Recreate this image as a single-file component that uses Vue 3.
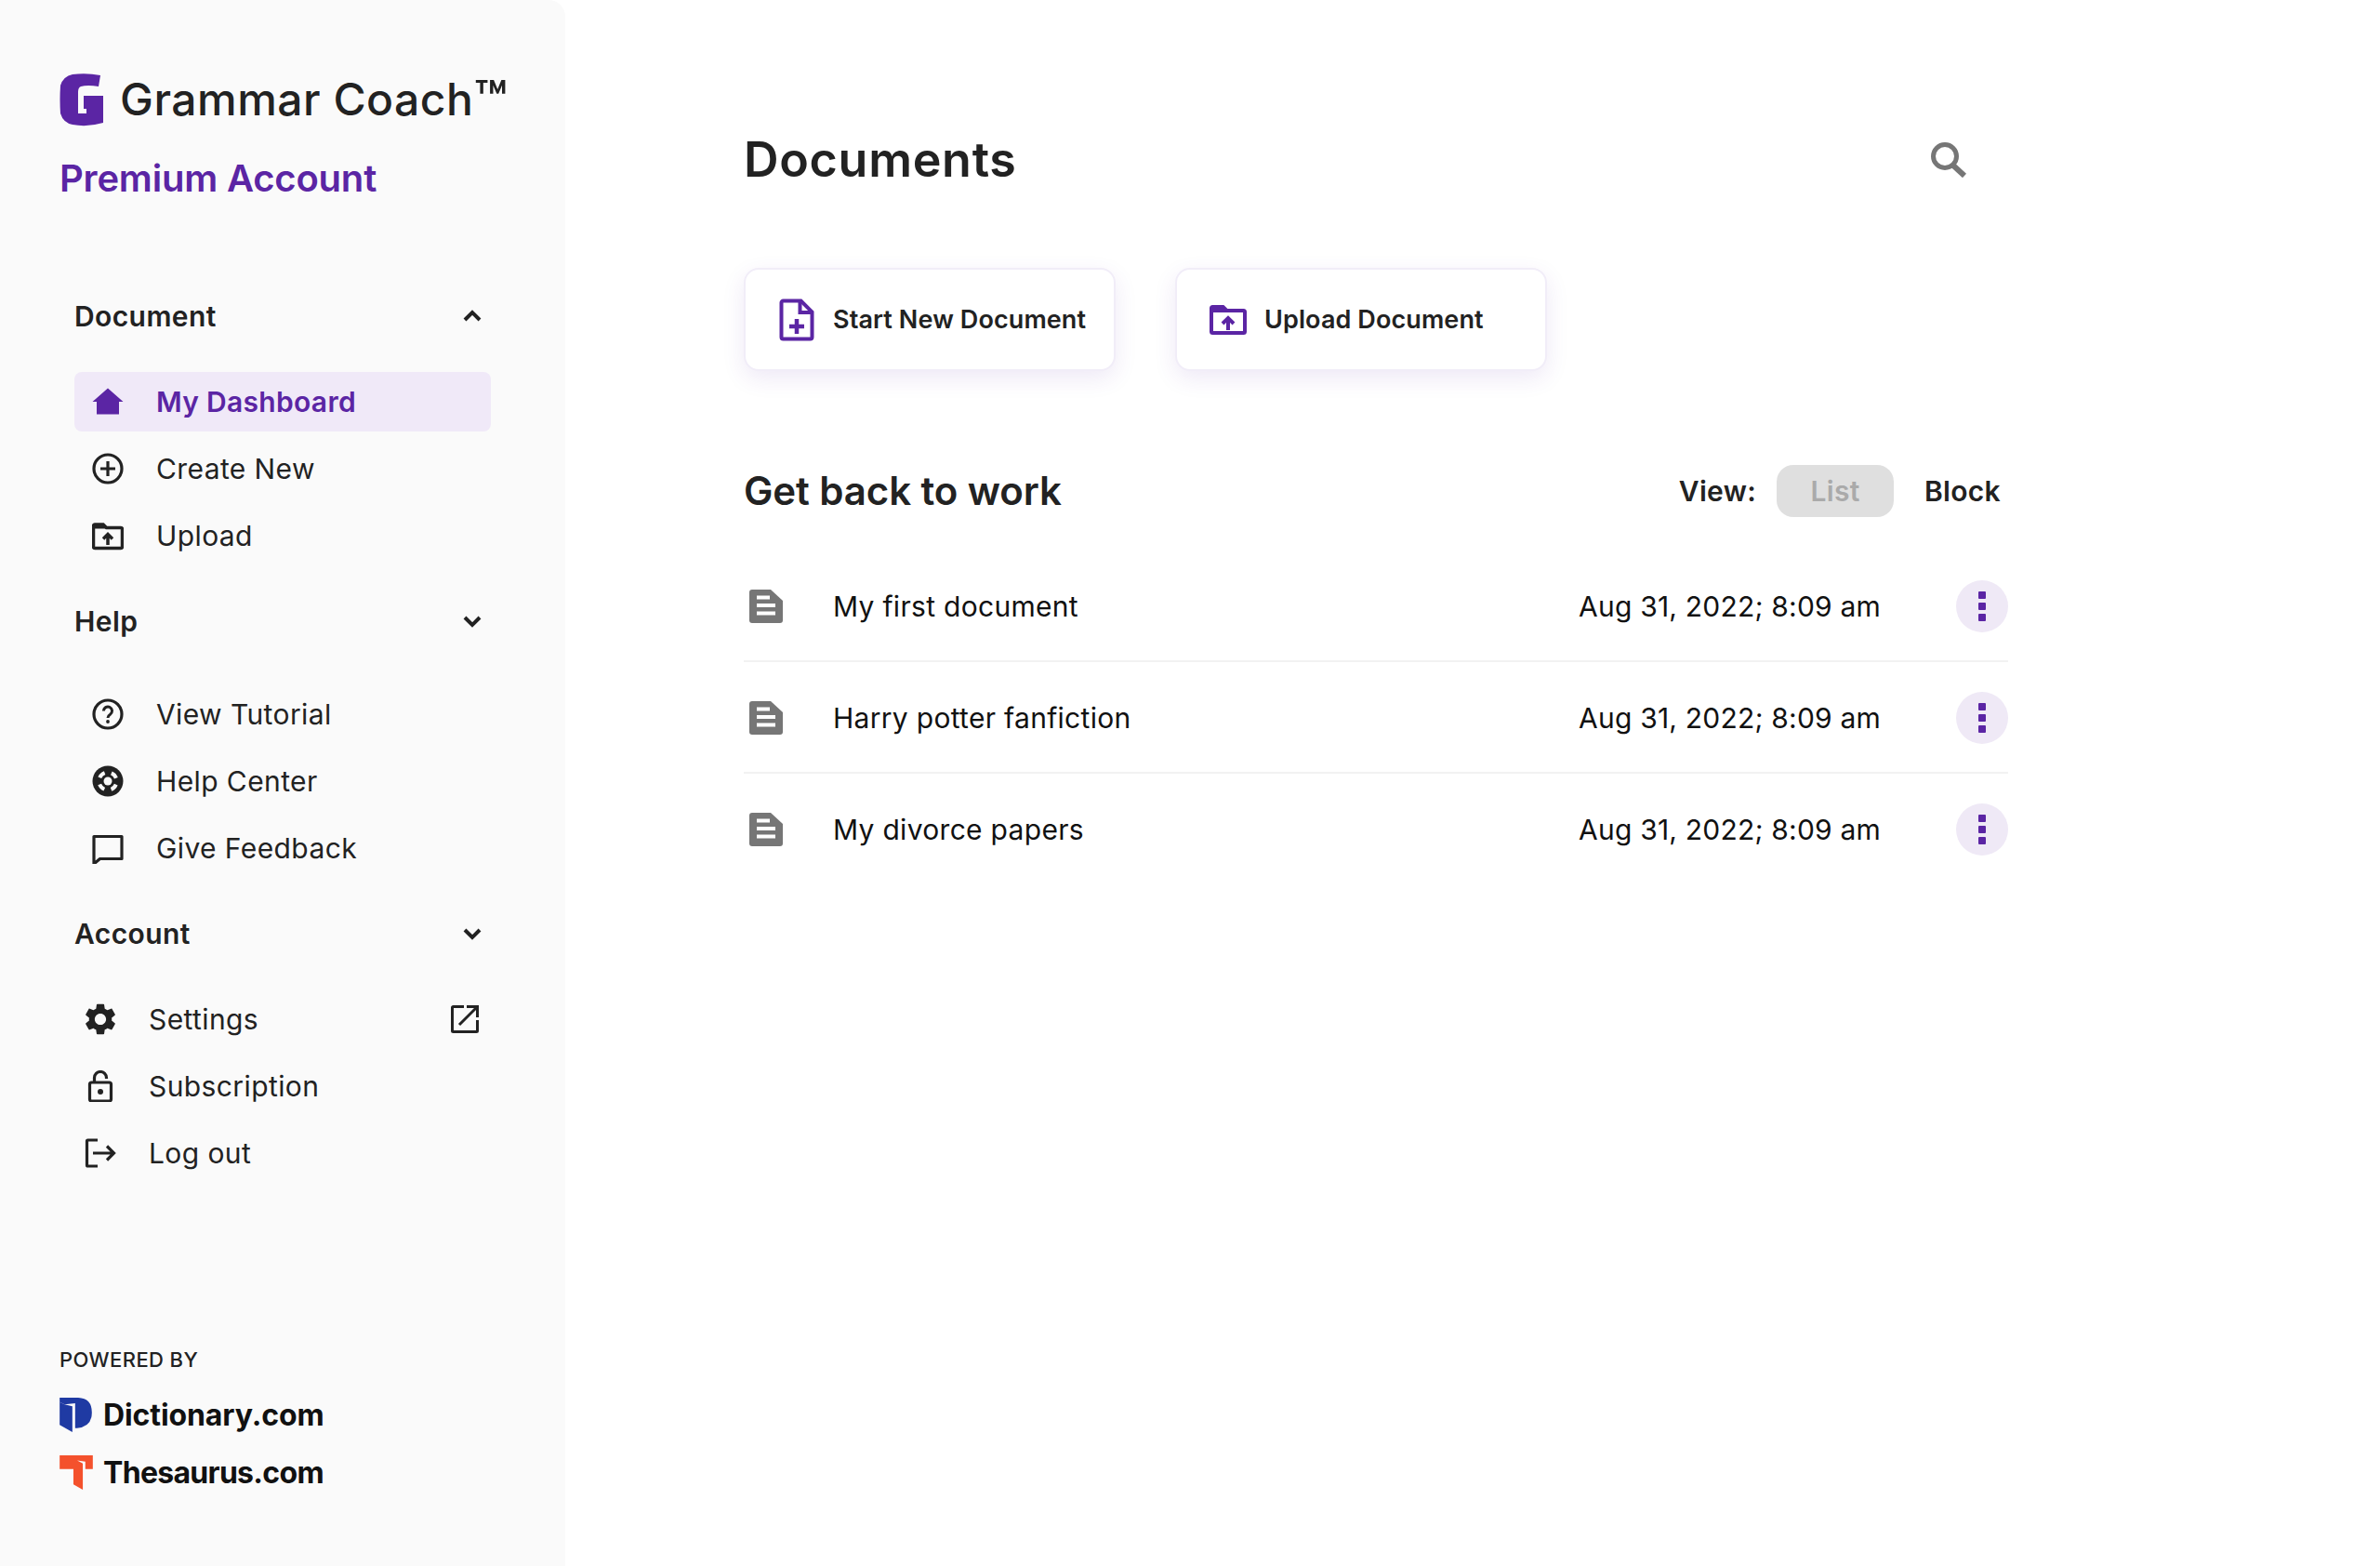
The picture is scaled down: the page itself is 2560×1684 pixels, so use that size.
<script setup>
const icons = {
  home: '<path d="M17 2.500 0.500 17H5v13.500h24V17h4.500z" fill="currentColor"/>',
  plus: '<circle cx="17" cy="17" r="15" fill="none" stroke="currentColor" stroke-width="3.200"/><path d="M17 9v16M9 17h16" stroke="currentColor" stroke-width="3.200" fill="none"/>',
  folder: '<path d="M1.500 6.500a1.500 1.500 0 0 1 1.500-1.500h9l3.500 3.500H31a1.500 1.500 0 0 1 1.500 1.500v19a1.500 1.500 0 0 1-1.500 1.500H3a1.500 1.500 0 0 1-1.500-1.500z" fill="none" stroke="currentColor" stroke-width="3.500"/><path d="M1.500 5h11l4 4.500H1.500z" fill="currentColor"/><path d="M17 27V17M12 20.500l5-5 5 5" fill="none" stroke="currentColor" stroke-width="3.500"/>',
  help: '<circle cx="17" cy="17" r="15" fill="none" stroke="currentColor" stroke-width="3.200"/><path d="M12.500 13.500a4.500 4.500 0 1 1 7 3.700c-1.600 1-2.500 1.800-2.500 3.800" fill="none" stroke="currentColor" stroke-width="3"/><circle cx="17" cy="25" r="1.900" fill="currentColor"/>',
  support: '<circle cx="17" cy="17" r="16.500" fill="currentColor"/><circle cx="17" cy="17" r="4.500" fill="#fafafa"/><circle cx="17" cy="17" r="9.500" fill="none" stroke="#fafafa" stroke-width="4" stroke-dasharray="7.500 7.420" stroke-dashoffset="-3.710"/>',
  chat: '<path d="M2 4.500h30v24H8.500L2 34z" fill="none" stroke="currentColor" stroke-width="3.200" stroke-linejoin="round"/>',
  gear: '<path transform="translate(-3.400 -3.400) scale(1.700)" d="M19.140 12.940c.04-.3.06-.61.06-.94 0-.32-.02-.64-.07-.94l2.030-1.580c.18-.14.23-.41.12-.61l-1.920-3.320c-.12-.22-.37-.29-.59-.22l-2.390.96c-.5-.38-1.030-.7-1.620-.94l-.36-2.540c-.04-.24-.24-.41-.48-.41h-3.840c-.24 0-.43.17-.47.41l-.36 2.540c-.59.24-1.130.57-1.620.94l-2.390-.96c-.22-.08-.47 0-.59.22L2.740 8.870c-.12.21-.08.47.12.61l2.030 1.580c-.05.3-.09.63-.09.94s.02.64.07.94l-2.030 1.580c-.18.14-.23.41-.12.61l1.920 3.320c.12.22.37.29.59.22l2.390-.96c.5.38 1.030.7 1.620.94l.36 2.540c.05.24.24.41.48.41h3.840c.24 0 .44-.17.47-.41l.36-2.540c.59-.24 1.130-.56 1.620-.94l2.390.96c.22.08.47 0 .59-.22l1.920-3.320c.12-.22.07-.47-.12-.61l-2.010-1.580zM12 15.600c-1.980 0-3.600-1.620-3.600-3.600s1.620-3.600 3.600-3.600 3.600 1.620 3.600 3.600-1.620 3.600-3.600 3.600z" fill="currentColor"/>',
  lock: '<rect x="5.500" y="13" width="23" height="20" rx="2" fill="none" stroke="currentColor" stroke-width="3.200"/><path d="M10.500 13V8a6.500 6.500 0 0 1 13 0v1" fill="none" stroke="currentColor" stroke-width="3.200"/><circle cx="17" cy="23" r="3" fill="currentColor"/>',
  logout: '<path d="M14 3H3.500a1 1 0 0 0-1 1v26a1 1 0 0 0 1 1H14" fill="none" stroke="currentColor" stroke-width="3.200"/><path d="M9 17h22M24 9.500l7.500 7.500-7.500 7.500" fill="none" stroke="currentColor" stroke-width="3.200"/>'
}

const sections = [
  {
    name: 'doc', title: 'Document', open: true,
    items: [
      { label: 'My Dashboard', icon: 'home', active: true },
      { label: 'Create New', icon: 'plus' },
      { label: 'Upload', icon: 'folder' }
    ]
  },
  {
    name: 'help', title: 'Help',
    items: [
      { label: 'View Tutorial', icon: 'help' },
      { label: 'Help Center', icon: 'support' },
      { label: 'Give Feedback', icon: 'chat' }
    ]
  },
  {
    name: 'account', title: 'Account',
    items: [
      { label: 'Settings', icon: 'gear', external: true },
      { label: 'Subscription', icon: 'lock' },
      { label: 'Log out', icon: 'logout' }
    ]
  }
]

const documentos = [
  { id: 1, titulo: 'My first document', fecha: 'Aug 31, 2022; 8:09 am' },
  { id: 2, titulo: 'Harry potter fanfiction', fecha: 'Aug 31, 2022; 8:09 am' },
  { id: 3, titulo: 'My divorce papers', fecha: 'Aug 31, 2022; 8:09 am' }
]
</script>

<template>
  <div class="layout">
    <aside class="sidebar">
      <div class="brand">
        <svg class="brand-logo" width="48" height="58" viewBox="0 0 48 58">
          <path d="M14 2Q29 0 44 3L42 15Q30 13 23 15Q20 16 20 21L20 44L29 44L29 39L26 39L26 25L47 25L47 54Q30 59 14 56Q4 54 1 44Q0 29 1 14Q4 4 14 2Z" fill="#5b25a4"/>
        </svg>
        <span class="brand-name">Grammar Coach<span class="brand-tm">™</span></span>
      </div>
      <div class="premium">Premium Account</div>

      <nav class="nav">
        <section v-for="s in sections" :key="s.name" class="section" :class="'section-' + s.name">
          <header class="section-head">
            <span>{{ s.title }}</span>
            <svg width="20" height="14" viewBox="0 0 20 14">
              <path :d="s.open ? 'M2 11l8-8 8 8' : 'M2 3l8 8 8-8'" fill="none" stroke="#222" stroke-width="4"/>
            </svg>
          </header>
          <ul class="nav-list">
            <li v-for="item in s.items" :key="item.label" class="nav-row" :class="{ active: item.active }">
              <svg class="nav-icon" width="34" height="34" viewBox="0 0 34 34" v-html="icons[item.icon]"></svg>
              <span class="nav-label">{{ item.label }}</span>
              <svg v-if="item.external" class="nav-external" width="30" height="30" viewBox="0 0 30 30">
                <path d="M14 1.500H2.500a1 1 0 0 0-1 1v25a1 1 0 0 0 1 1h25a1 1 0 0 0 1-1V16" fill="none" stroke="#222" stroke-width="3"/>
                <path d="M9 21 27 3M17 1.500h11.500V13" fill="none" stroke="#222" stroke-width="3"/>
              </svg>
            </li>
          </ul>
        </section>
      </nav>

      <footer class="powered">
        <div class="powered-title">POWERED BY</div>
        <div class="partner dict">
          <svg width="35" height="37" viewBox="24 24 104 111">
            <path d="M24 24H84Q128 26 128 72Q128 118 80 122H74V42L40 46L24 38Z" fill="#1f3aa3"/>
            <path d="M24 38L40 46L65 52V135L24 112Z" fill="#1f3aa3"/>
          </svg>
          <span>Dictionary.com</span>
        </div>
        <div class="partner thes">
          <svg width="36" height="37" viewBox="24 212 106 110">
            <path d="M24 212H130V256H106V232L80 228L98 238V322L68 305V256H24Z" fill="#f4512c"/>
          </svg>
          <span>Thesaurus.com</span>
        </div>
      </footer>
    </aside>

    <main class="content">
      <div class="top-row">
        <h1>Documents</h1>
        <svg class="search" width="40" height="38" viewBox="0 0 40 38">
          <circle cx="15" cy="15" r="12.500" fill="none" stroke="#767676" stroke-width="5"/>
          <path d="M23 24l13 12" stroke="#767676" stroke-width="6" fill="none"/>
        </svg>
      </div>

      <div class="actions">
        <button class="action">
          <svg width="40" height="46" viewBox="0 0 40 46">
            <path d="M3.500 4.500a2 2 0 0 1 2-2h19l12 12v27a2 2 0 0 1-2 2h-29a2 2 0 0 1-2-2z" fill="none" stroke="#5b25a4" stroke-width="4"/>
            <path d="M23.500 3v12h13" fill="none" stroke="#5b25a4" stroke-width="4"/>
            <path d="M20 22v16M12 30h16" stroke="#5b25a4" stroke-width="4.500" fill="none"/>
          </svg>
          <span>Start New Document</span>
        </button>
        <button class="action">
          <svg width="40" height="32" viewBox="0 0 40 32">
            <path d="M2 3.500a1.500 1.500 0 0 1 1.500-1.500h11l4 4h18a1.500 1.500 0 0 1 1.500 1.500v21a1.500 1.500 0 0 1-1.500 1.500h-33a1.500 1.500 0 0 1-1.500-1.500z" fill="none" stroke="#5b25a4" stroke-width="4"/>
            <path d="M1.500 2h13l5 6h-18z" fill="#5b25a4"/>
            <path d="M20 27V15M14 20l6-6 6 6" fill="none" stroke="#5b25a4" stroke-width="4"/>
          </svg>
          <span>Upload Document</span>
        </button>
      </div>

      <div class="list-head">
        <h2>Get back to work</h2>
        <div class="view-switch">
          <span class="view-label">View:</span>
          <span class="view-pill">List</span>
          <span class="view-block">Block</span>
        </div>
      </div>

      <div class="doc-list">
        <article v-for="doc in documentos" :key="doc.id" class="doc-row">
          <svg class="doc-icon" width="36" height="36" viewBox="0 0 36 36">
            <path d="M3 0h20l13 12v21a3 3 0 0 1-3 3H3a3 3 0 0 1-3-3V3a3 3 0 0 1 3-3z" fill="#767676"/>
            <path d="M8 8.500h14M8 17h20M8 25.500h20" stroke="#fff" stroke-width="4"/>
          </svg>
          <span class="doc-title">{{ doc.titulo }}</span>
          <span class="doc-date">{{ doc.fecha }}</span>
          <span class="doc-menu"><i></i><i></i><i></i></span>
        </article>
      </div>
    </main>
  </div>
</template>

<style scoped>
.layout { display: flex; min-height: 1684px; background: #fff; font-family: Inter, "Liberation Sans", sans-serif; color: #222; }

.sidebar { width: 608px; height: 1684px; box-sizing: border-box; flex-shrink: 0; display: flex; flex-direction: column; background: #fafafa; border-top-right-radius: 18px; padding: 78px 0 82px 64px; }
.brand { display: flex; align-items: center; gap: 17px; height: 58px; }
.brand-name { font-size: 48px; line-height: 58px; font-weight: 500; letter-spacing: 0.5px; }
.brand-tm { font-size: 58px; line-height: 1; font-weight: 600; letter-spacing: 0; vertical-align: -4px; }
.premium { margin-top: 28px; font-size: 40px; line-height: 56px; font-weight: 600; letter-spacing: -0.2px; color: #5b25a4; }

.nav { margin-top: 88px; width: 448px; margin-left: 16px; }
.section-head { display: flex; align-items: center; justify-content: space-between; height: 64px; padding-right: 10px; font-size: 30px; font-weight: 600; letter-spacing: 0.4px; }
.nav-list { list-style: none; margin: 0; padding: 0; display: flex; flex-direction: column; gap: 8px; }
.section-doc { margin-bottom: 28px; }
.section-doc .nav-list { margin-top: 28px; }
.section-help { margin-bottom: 28px; }
.section-help .nav-list { margin-top: 36px; }
.section-account .nav-list { margin-top: 28px; }

.nav-row { display: flex; align-items: center; height: 64px; gap: 35px; padding-left: 19px; border-radius: 8px; font-size: 30px; letter-spacing: 0.4px; color: #222; }
.section-account .nav-row { padding-left: 11px; }
.nav-row.active { background: #f0e9f8; color: #5b25a4; font-weight: 600; letter-spacing: 0.3px; }
.nav-external { margin-left: auto; margin-right: 13px; }

.powered { margin-top: auto; }
.powered-title { font-size: 22px; line-height: 32px; font-weight: 500; letter-spacing: 0.4px; }
.partner { display: flex; align-items: center; height: 38px; margin-top: 24px; font-size: 32px; font-weight: 700; color: #111; }
.dict { gap: 12px; letter-spacing: -0.1px; }
.thes { gap: 11px; letter-spacing: -0.7px; }

.content { flex: 1; padding: 139px 0 0 192px; }
.top-row { display: flex; align-items: center; justify-content: space-between; width: 1317px; height: 64px; }
.search { margin-top: 2px; }
h1 { margin: 0; font-size: 52px; font-weight: 600; letter-spacing: 0.7px; }
.actions { display: flex; gap: 64px; margin-top: 85px; }
.action { display: flex; align-items: center; gap: 19px; width: 400px; height: 111px; box-sizing: border-box; padding: 0 0 0 35px; background: #fff; border: 2px solid #f1edf8; border-radius: 16px; box-shadow: 0 8px 24px rgba(91, 37, 164, 0.1); font-family: inherit; font-size: 27px; font-weight: 600; letter-spacing: 0.1px; color: #222; }

.list-head { display: flex; align-items: center; justify-content: space-between; width: 1360px; margin-top: 101px; height: 56px; }
h2 { margin: 0 0 2px; font-size: 42px; font-weight: 600; letter-spacing: -0.1px; }
.view-switch { display: flex; align-items: center; padding-right: 8px; font-size: 30px; font-weight: 600; letter-spacing: 0.3px; }
.view-pill { display: flex; align-items: center; justify-content: center; width: 126px; height: 56px; margin: 0 33px 0 22px; border-radius: 18px; background: #dfdfdf; color: #aaa; }

.doc-list { width: 1360px; margin-top: 36px; }
.doc-row { display: flex; align-items: center; height: 120px; box-sizing: border-box; padding: 2px 0 0 6px; border-bottom: 2px solid #f2f2f2; font-size: 30px; color: #111; }
.doc-row:last-child { border-bottom-color: transparent; }
.doc-title { margin-left: 54px; letter-spacing: 0.3px; }
.doc-date { margin-left: auto; margin-right: 81px; letter-spacing: 0.2px; }
.doc-menu { display: flex; flex-direction: column; align-items: center; justify-content: center; gap: 4px; width: 56px; height: 56px; border-radius: 50%; background: #efe9f6; }
.doc-menu i { display: block; width: 8px; height: 8px; background: #5b25a4; border-radius: 1px; }
</style>

<style>
body { background: #fff; }
</style>
